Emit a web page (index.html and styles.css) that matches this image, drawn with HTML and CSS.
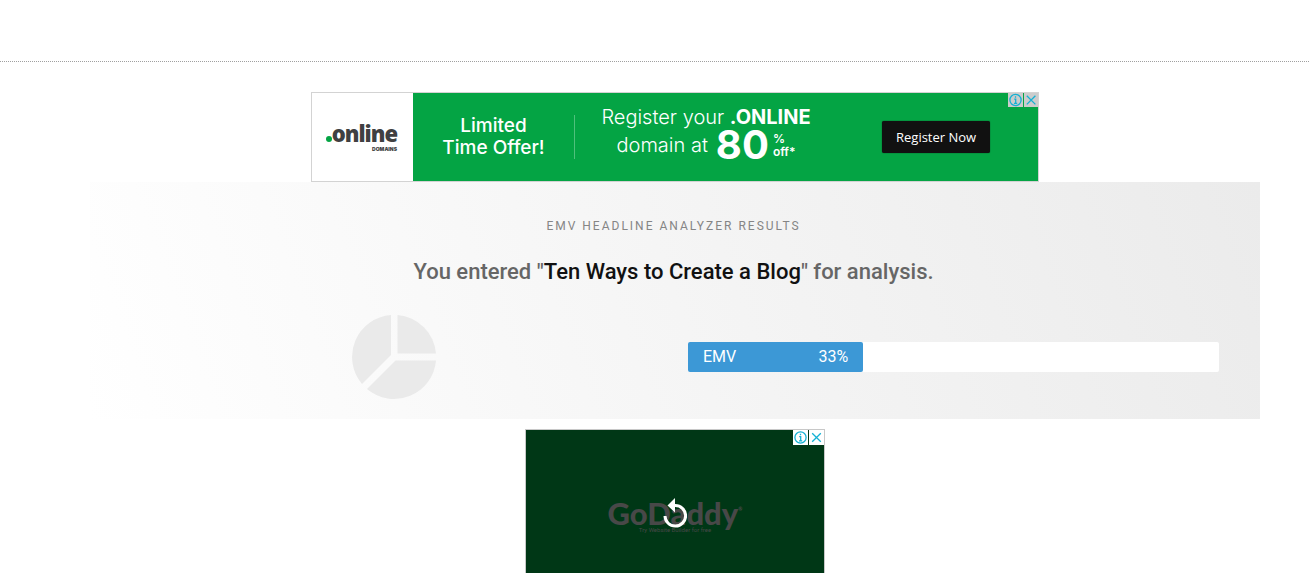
FILE: index.html
```html
<!DOCTYPE html>
<html lang="en">
<head>
    <meta charset="UTF-8">
    <meta name="viewport" content="width=device-width, initial-scale=1.0">
    <title>EMV Headline Analyzer Results</title>
    <link rel="stylesheet" href="styles.css">
</head>
<body>

    <header class="site-header"></header>

    <main class="container">

        <!-- Top banner -->
        <div class="banner">
            <div class="banner-logo">
                <div class="online"><span class="dot"></span>online</div>
                <div class="domains">DOMAINS</div>
            </div>
            <div class="banner-body">
                <p class="limited">Limited<br>Time Offer!</p>
                <div class="copy">
                    <p>Register your <b>.ONLINE</b></p>
                    <p class="deal">domain at <b class="number">80</b><span class="off">%<br>off*</span></p>
                </div>
                <a class="register" href="#">Register Now</a>
            </div>
            <div class="ad-choices">
                <button type="button" aria-label="Ad info">
                    <svg width="15" height="14" viewBox="0 0 15 14"><circle cx="7.5" cy="7" r="5.6"/><path d="M7.5 3.2v1.500M6.200 6.200h1.500v4M6 10.300h3.200"/></svg>
                </button>
                <button type="button" aria-label="Close ad">
                    <svg width="14" height="14" viewBox="0 0 14 14"><path d="M2.8 2.8l8.600 8.600M11.400 2.800l-8.600 8.600"/></svg>
                </button>
            </div>
        </div>

        <!-- Results -->
        <section class="results">
            <h1>EMV Headline Analyzer Results</h1>
            <h2>You entered "<span>Ten Ways to Create a Blog</span>" for analysis.</h2>
            <div class="score">
                <div class="pie">
                    <svg width="84" height="84" viewBox="0 0 84 84">
                        <path d="M39 0A42 42 0 0 0 10 69L39 40Z"/>
                        <path d="M45.500 0A42 42 0 0 1 84 38.500H45.500Z"/>
                        <path d="M84 45.500A42 42 0 0 1 15 74L43.500 45.500Z"/>
                    </svg>
                </div>
                <div class="bar">
                    <div class="bar-fill" style="width: 33%"><span>EMV</span><span>33%</span></div>
                </div>
            </div>
        </section>

        <!-- Bottom ad -->
        <div class="video-ad">
            <div class="godaddy">GoDaddy<sup>®</sup></div>
            <div class="tagline">Try Website Builder for free</div>
            <button type="button" class="replay" aria-label="Replay">
                <svg width="24" height="30" viewBox="0 0 24 30"><path class="ring" d="M2 18A10.300 10.300 0 1 0 12 7.500"/><path class="head" d="M12 0v14.500L4.500 7.500Z"/></svg>
            </button>
            <div class="ad-choices light">
                <button type="button" aria-label="Ad info">
                    <svg width="15" height="15" viewBox="0 0 15 15"><circle cx="7.5" cy="7.5" r="5.6"/><path d="M7.5 3.700v1.500M6.200 6.700h1.500v4M6 10.800h3.200"/></svg>
                </button>
                <button type="button" aria-label="Close ad">
                    <svg width="15" height="15" viewBox="0 0 15 15"><path d="M3.200 3.200l8.600 8.600M11.800 3.200l-8.600 8.600"/></svg>
                </button>
            </div>
        </div>

    </main>

</body>
</html>
```
FILE: styles.css
```css
* {
    margin: 0;
    padding: 0;
    box-sizing: border-box;
}

body {
    font-family: Roboto, "Liberation Sans", sans-serif;
    background-color: #ffffff;
    color: #666666;
    overflow: hidden;
}

.site-header {
    height: 62px;
    border-bottom: 1px dotted #a0a0a0;
}

.container {
    margin: 30px 49px 0 90px;
}

button {
    border: none;
    background: none;
    cursor: pointer;
}

svg {
    display: block;
}

/* Top banner */
.banner {
    position: relative;
    display: flex;
    max-width: 728px;
    height: 90px;
    margin: 0 auto;
    border: 1px solid #d3d3d3;
    font-family: Inter, sans-serif;
}

.banner-logo {
    width: 101px;
    padding: 28px 16px 0 14px;
    text-align: right;
    color: #404041;
}

.online {
    display: flex;
    align-items: baseline;
    justify-content: flex-end;
    font-family: "Open Sans", sans-serif;
    font-size: 22px;
    font-weight: 800;
    letter-spacing: -1px;
    line-height: 25px;
}

.dot {
    flex: none;
    width: 6px;
    height: 6px;
    border-radius: 50%;
    background-color: #04a444;
}

.domains {
    font-size: 5px;
    font-weight: 900;
    line-height: 6px;
}

.banner-body {
    flex: 1;
    display: flex;
    align-items: center;
    background-color: #04a444;
    color: #ffffff;
}

.limited {
    width: 162px;
    height: 44px;
    border-right: 1px solid #4fc07c;
    text-align: center;
    font-size: 19px;
    font-weight: 500;
    line-height: 22px;
}

.copy {
    width: 262px;
    padding-bottom: 6px;
    text-align: center;
    font-size: 20px;
    font-weight: 300;
    line-height: 22px;
}

.copy b {
    font-weight: 700;
}

.deal {
    display: flex;
    align-items: center;
    justify-content: center;
    line-height: 34px;
}

.copy .number {
    margin: 0 4px 0 8px;
    font-size: 40px;
}

.off {
    font-size: 12px;
    font-weight: 600;
    line-height: 13px;
    text-align: left;
}

.register {
    margin-left: 45px;
    padding: 0 14px;
    border-radius: 2px;
    background-color: #111111;
    color: #ffffff;
    font-family: "Open Sans", sans-serif;
    font-size: 13px;
    line-height: 32px;
    text-decoration: none;
    box-shadow: 0 0 1px #111111;
}

.ad-choices {
    position: absolute;
    top: 0;
    right: 0;
    display: flex;
    gap: 1px;
}

.ad-choices button {
    background-color: #cccccc;
}

.ad-choices.light button {
    background-color: #ffffff;
}

.ad-choices svg {
    fill: none;
    stroke: #14b1d4;
    stroke-width: 1.3;
}

/* Results */
.results {
    padding: 36px 41px 20px 38px;
    background-image: linear-gradient(70deg, #ffffff 0%, #ebebeb 100%);
    text-align: center;
}

h1 {
    color: #858585;
    font-size: 12px;
    font-weight: 400;
    letter-spacing: 2px;
    line-height: 16px;
    text-transform: uppercase;
}

h2 {
    margin-top: 24px;
    font-size: 22px;
    font-weight: 500;
    line-height: 28px;
}

h2 span {
    color: #111111;
}

.score {
    display: grid;
    grid-template-columns: 1fr 1fr;
    gap: 29px;
    align-items: center;
    margin-top: 29px;
}

.pie {
    display: flex;
    justify-content: center;
    fill: #eaeaea;
}

.bar {
    height: 30px;
    border-radius: 2px;
    background-color: #ffffff;
}

.bar-fill {
    display: flex;
    justify-content: space-between;
    padding: 0 15px;
    border-radius: 2px;
    background-color: #3c98d6;
    color: #ffffff;
    font-size: 16px;
    line-height: 30px;
}

/* Bottom ad */
.video-ad {
    position: relative;
    max-width: 300px;
    height: 250px;
    margin: 10px auto 0;
    padding-top: 69px;
    border: 1px solid #c8c8c8;
    background-color: #003716;
    color: #484848;
    text-align: center;
}

.godaddy {
    font-family: Lato, sans-serif;
    font-size: 31px;
    font-weight: 900;
    line-height: 28px;
}

.godaddy sup {
    font-size: 5px;
    vertical-align: 14px;
    line-height: 5px;
}

.tagline {
    font-size: 6px;
    line-height: 6px;
}

.replay {
    position: absolute;
    top: 68px;
    left: 137px;
}

.replay .ring {
    fill: none;
    stroke: #ffffff;
    stroke-width: 3;
}

.replay .head {
    fill: #ffffff;
}
```
